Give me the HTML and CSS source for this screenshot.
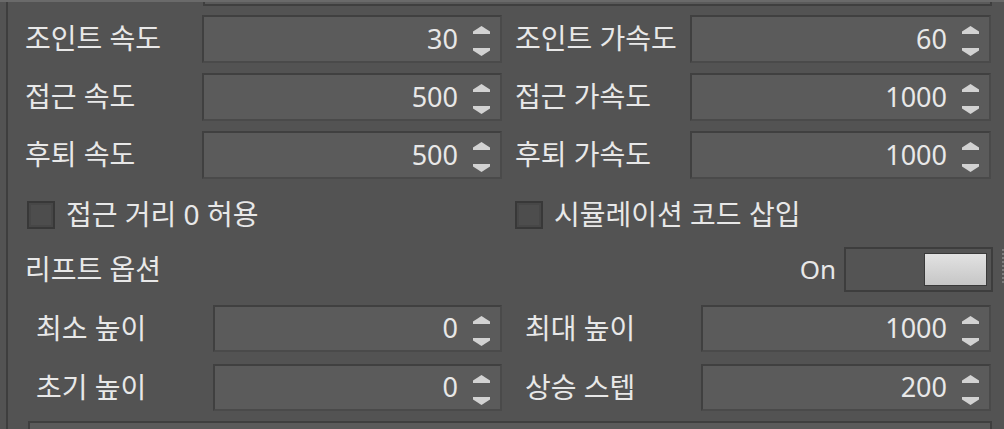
FILE: index.html
```html
<!DOCTYPE html>
<html lang="ko">
  <head>
    <meta charset="UTF-8" />
    <meta name="viewport" content="width=device-width, initial-scale=1.0" />
    <title>리프트 설정</title>
    <link rel="stylesheet" href="styles.css">
  </head>
  <body>
    <div class="top-strip"></div>
    <div class="panel">
      <div class="prev-box"></div>

      <div class="speeds">
        <span class="label">조인트 속도</span>
        <div class="spin"><span class="val">30</span><svg class="arrows" viewBox="0 0 17 30"><polygon points="8.5,0 17,5.5 17,8 0,8 0,5.5" /><polygon points="0,22 17,22 17,24.5 8.5,30 0,24.5" /></svg></div>
        <span class="label right">조인트 가속도</span>
        <div class="spin"><span class="val">60</span><svg class="arrows" viewBox="0 0 17 30"><polygon points="8.5,0 17,5.5 17,8 0,8 0,5.5" /><polygon points="0,22 17,22 17,24.5 8.5,30 0,24.5" /></svg></div>

        <span class="label">접근 속도</span>
        <div class="spin"><span class="val">500</span><svg class="arrows" viewBox="0 0 17 30"><polygon points="8.5,0 17,5.5 17,8 0,8 0,5.5" /><polygon points="0,22 17,22 17,24.5 8.5,30 0,24.5" /></svg></div>
        <span class="label right">접근 가속도</span>
        <div class="spin"><span class="val">1000</span><svg class="arrows" viewBox="0 0 17 30"><polygon points="8.5,0 17,5.5 17,8 0,8 0,5.5" /><polygon points="0,22 17,22 17,24.5 8.5,30 0,24.5" /></svg></div>

        <span class="label">후퇴 속도</span>
        <div class="spin"><span class="val">500</span><svg class="arrows" viewBox="0 0 17 30"><polygon points="8.5,0 17,5.5 17,8 0,8 0,5.5" /><polygon points="0,22 17,22 17,24.5 8.5,30 0,24.5" /></svg></div>
        <span class="label right">후퇴 가속도</span>
        <div class="spin"><span class="val">1000</span><svg class="arrows" viewBox="0 0 17 30"><polygon points="8.5,0 17,5.5 17,8 0,8 0,5.5" /><polygon points="0,22 17,22 17,24.5 8.5,30 0,24.5" /></svg></div>
      </div>

      <div class="checks">
        <label class="check first"><span class="box"></span>접근 거리 0 허용</label>
        <label class="check second"><span class="box"></span>시뮬레이션 코드 삽입</label>
      </div>

      <div class="lift-row">
        <span class="label">리프트 옵션</span>
        <span class="on">On</span>
        <div class="toggle"><span class="knob"></span></div>
        <span class="grip"></span>
      </div>

      <div class="heights">
        <span class="label">최소 높이</span>
        <div class="spin"><span class="val">0</span><svg class="arrows" viewBox="0 0 17 30"><polygon points="8.5,0 17,5.5 17,8 0,8 0,5.5" /><polygon points="0,22 17,22 17,24.5 8.5,30 0,24.5" /></svg></div>
        <span class="label right">최대 높이</span>
        <div class="spin"><span class="val">1000</span><svg class="arrows" viewBox="0 0 17 30"><polygon points="8.5,0 17,5.5 17,8 0,8 0,5.5" /><polygon points="0,22 17,22 17,24.5 8.5,30 0,24.5" /></svg></div>

        <span class="label">초기 높이</span>
        <div class="spin"><span class="val">0</span><svg class="arrows" viewBox="0 0 17 30"><polygon points="8.5,0 17,5.5 17,8 0,8 0,5.5" /><polygon points="0,22 17,22 17,24.5 8.5,30 0,24.5" /></svg></div>
        <span class="label right">상승 스텝</span>
        <div class="spin"><span class="val">200</span><svg class="arrows" viewBox="0 0 17 30"><polygon points="8.5,0 17,5.5 17,8 0,8 0,5.5" /><polygon points="0,22 17,22 17,24.5 8.5,30 0,24.5" /></svg></div>
      </div>

      <div class="next-box"></div>
    </div>
  </body>
</html>
```

FILE: styles.css
```css
html,
body {
  margin: 0;
  height: 100%;
  overflow: hidden;
}
body {
  background: #535353;
  color: #e8e8e8;
  font-family: "Noto Sans", "Noto Sans CJK KR", sans-serif;
  font-size: 28px;
  line-height: 1.2;
}
.top-strip {
  height: 2px;
  background: #6a6a6a;
}
.panel {
  margin-left: 6px;
  border-left: 2px solid #3e3e3e;
  min-height: calc(100% - 2px);
}
.prev-box {
  margin-left: 195px;
  width: 785px;
  height: 2px;
  background: #5a5a5a;
  border: 2px solid #3f3f3f;
  border-top: none;
}
.label {
  display: flex;
  align-items: center;
  white-space: nowrap;
}
.speeds {
  display: grid;
  grid-template-columns: 177px 300px 188px 301px;
  grid-auto-rows: 48px;
  row-gap: 10px;
  margin-top: 9px;
  padding-left: 17px;
}
.speeds .right {
  padding-left: 13px;
}
.heights {
  display: grid;
  grid-template-columns: 177px 289px 199px 290px;
  grid-auto-rows: 47px;
  row-gap: 12px;
  margin-top: 13px;
  padding-left: 28px;
}
.heights .right {
  padding-left: 23px;
}
.spin {
  display: flex;
  align-items: center;
  justify-content: flex-end;
  padding-right: 10px;
  background: #5b5b5b;
  border: 2px solid #404040;
  border-right-color: #4a4a4a;
  border-bottom-color: #4a4a4a;
}
.val {
  font-size: 27px;
}
.arrows {
  width: 17px;
  height: 30px;
  margin-left: 15px;
  margin-top: 4px;
  fill: #d2d2d2;
}
.checks {
  display: grid;
  grid-template-columns: 477px 1fr;
  height: 28px;
  margin-top: 19px;
  padding-left: 17px;
}
.check {
  display: flex;
  align-items: center;
  gap: 11px;
  white-space: nowrap;
}
.check.first {
  margin-left: 2px;
}
.check.second {
  padding-left: 13px;
}
.box {
  flex: none;
  width: 24px;
  height: 24px;
  background: #4d4d4d;
  border: 2px solid #383838;
  box-shadow: inset 0 0 0 2px #474747;
}
.lift-row {
  display: flex;
  align-items: center;
  height: 45px;
  margin-top: 21px;
  padding-left: 17px;
}
.lift-row .label {
  flex: 1;
}
.on {
  font-size: 26px;
  margin-right: 8px;
}
.toggle {
  display: flex;
  justify-content: flex-end;
  align-items: center;
  box-sizing: border-box;
  width: 149px;
  height: 45px;
  padding-right: 4px;
  background: #545454;
  border: 2px solid #3d3d3d;
}
.knob {
  width: 61px;
  height: 31px;
  background: linear-gradient(#e2e2e2, #c6c6c6);
  border: 1px solid #393939;
}
.grip {
  width: 0;
  height: 34px;
  margin-left: 9px;
  margin-bottom: 8px;
  border-left: 2px dotted #7c7c7c;
}
.next-box {
  margin-top: 10px;
  margin-left: 20px;
  width: 960px;
  height: 20px;
  background: #5a5a5a;
  border: 2px solid #3f3f3f;
  border-bottom: none;
}
```
